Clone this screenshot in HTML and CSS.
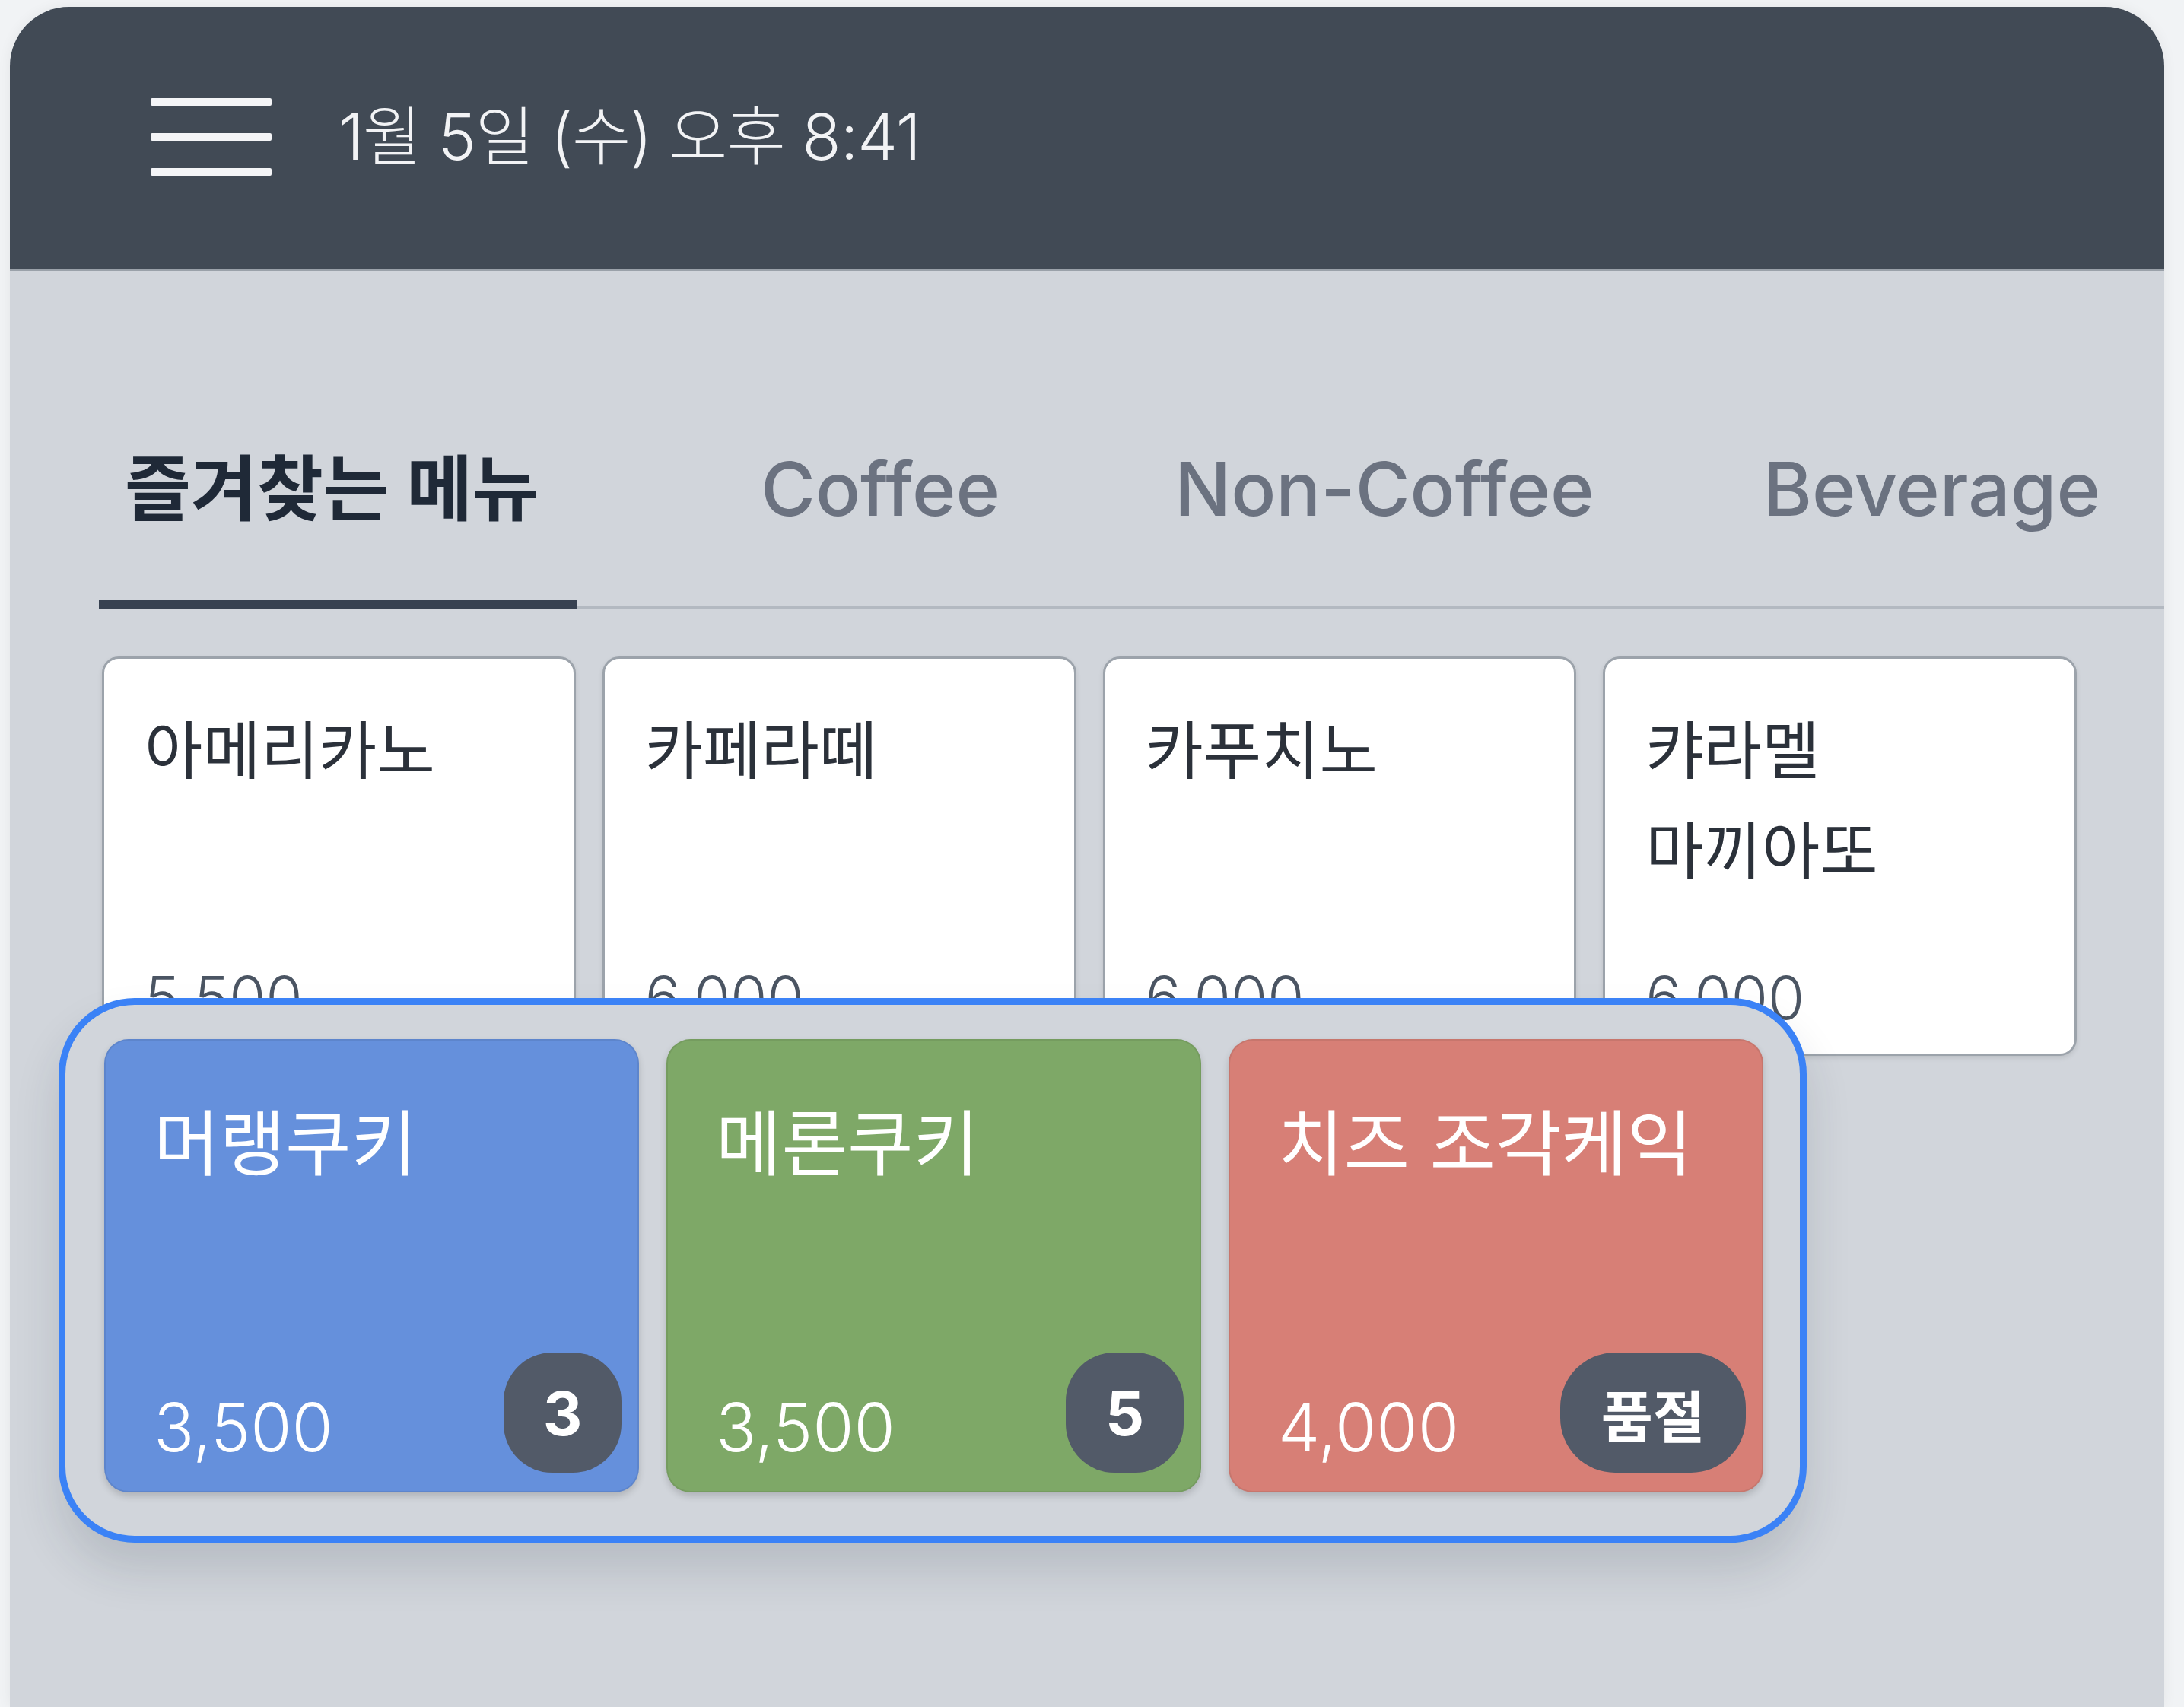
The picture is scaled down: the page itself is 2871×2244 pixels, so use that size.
FILE: index.html
```html
<!DOCTYPE html>
<html lang="ko">
<head>
<meta charset="utf-8">
<title>POS</title>
<link rel="stylesheet" href="styles.css">
</head>
<body>
  <div class="device">
    <header class="topbar">
      <button class="menu-btn" aria-label="메뉴">
        <span></span><span></span><span></span>
      </button>
      <div class="clock">1월 5일 (수) 오후 8:41</div>
    </header>
    <main class="content">
      <nav class="tabs">
        <div class="tab active">즐겨찾는 메뉴</div>
        <div class="tab tab-coffee">Coffee</div>
        <div class="tab tab-noncoffee">Non-Coffee</div>
        <div class="tab tab-beverage">Beverage</div>
      </nav>
      <section class="menu-grid">
        <div class="menu-card">
          <div class="menu-name">아메리카노</div>
          <div class="menu-price">5,500</div>
        </div>
        <div class="menu-card">
          <div class="menu-name">카페라떼</div>
          <div class="menu-price">6,000</div>
        </div>
        <div class="menu-card">
          <div class="menu-name">카푸치노</div>
          <div class="menu-price">6,000</div>
        </div>
        <div class="menu-card">
          <div class="menu-name">캬라멜 마끼아또</div>
          <div class="menu-price">6,000</div>
        </div>
      </section>
      <div class="tray">
        <div class="tray-item blue">
          <div class="item-name">머랭쿠키</div>
          <div class="item-foot">
            <span class="item-price">3,500</span>
            <span class="badge">3</span>
          </div>
        </div>
        <div class="tray-item green">
          <div class="item-name">메론쿠키</div>
          <div class="item-foot">
            <span class="item-price">3,500</span>
            <span class="badge">5</span>
          </div>
        </div>
        <div class="tray-item red">
          <div class="item-name">치즈 조각케익</div>
          <div class="item-foot">
            <span class="item-price">4,000</span>
            <span class="badge badge-wide">품절</span>
          </div>
        </div>
      </div>
    </main>
  </div>
</body>
</html>
```
FILE: styles.css
```css
* { box-sizing: border-box; }

html, body {
  margin: 0;
  padding: 0;
}

body {
  width: 2871px;
  height: 2244px;
  overflow: hidden;
  background: #f1f3f5;
  font-family: "Inter", "Noto Sans CJK KR", sans-serif;
}

.device {
  margin: 9px 26px 0 13px;
  height: 2235px;
  border-radius: 78px 78px 0 0;
  background: #d1d5db;
  overflow: hidden;
  box-shadow: 0 0 18px rgba(0, 0, 0, 0.06);
  display: flex;
  flex-direction: column;
}

/* ---------- top bar ---------- */
.topbar {
  height: 347px;
  flex: 0 0 auto;
  background: #414a55;
  border-bottom: 3px solid #9aa1a9;
  display: flex;
  align-items: center;
  padding-left: 185px;
  padding-bottom: 3px;
}

.menu-btn {
  width: 159px;
  height: 102px;
  padding: 0;
  border: 0;
  background: transparent;
  display: flex;
  flex-direction: column;
  justify-content: space-between;
}

.menu-btn span {
  display: block;
  height: 10px;
  width: 100%;
  border-radius: 2px;
  background: #f4f5f7;
}

.clock {
  margin-left: 88px;
  color: #f2f3f5;
  font-size: 84px;
  font-weight: 300;
  letter-spacing: -1px;
  line-height: 1;
}

/* ---------- content ---------- */
.content {
  position: relative;
  flex: 1 1 auto;
  padding: 229px 115px 0 117px;
}

.tabs {
  display: flex;
  margin-right: -115px;
  border-bottom: 3px solid #b3b9c1;
}

.tab {
  font-size: 98px;
  line-height: 116px;
  font-weight: 500;
  color: #6b7280;
  padding: 0 46px 88px 40px;
  margin-bottom: -3px;
  border-bottom: 11px solid transparent;
  white-space: nowrap;
}

.tab.active {
  color: #1f2937;
  font-weight: 700;
  font-size: 94.5px;
  padding-left: 34px;
  padding-right: 50px;
  border-bottom-color: #374151;
}

.tab-coffee { margin-left: 202px; }
.tab-noncoffee { margin-left: 144px; }
.tab-beverage { margin-left: 136px; }

.menu-grid {
  margin: 63px 0 0 4px;
  display: grid;
  grid-template-columns: repeat(4, 1fr);
  gap: 35px;
}

.menu-card {
  height: 525px;
  background: #ffffff;
  border: 3px solid #9ca3ab;
  border-radius: 22px;
  box-shadow: 0 3px 6px rgba(0, 0, 0, 0.10);
  padding: 55px 56px 34px 53px;
  display: flex;
  flex-direction: column;
  justify-content: space-between;
}

.menu-name {
  font-size: 83px;
  line-height: 132px;
  color: #2b313a;
  word-break: keep-all;
}

.menu-price {
  font-size: 78px;
  line-height: 1;
  font-weight: 300;
  color: #4b5563;
}

/* ---------- floating tray ---------- */
.tray {
  position: absolute;
  left: 64px;
  top: 956px;
  width: 2298px;
  height: 716px;
  border: 9px solid #3b82f6;
  border-radius: 100px;
  background: #d1d5db;
  box-shadow: 0 36px 60px rgba(30, 40, 55, 0.14);
  padding: 45px 50px 57px 51px;
  display: flex;
  gap: 36px;
}

.tray-item {
  flex: 0 0 703px;
  height: 596px;
  border-radius: 32px;
  border: 2px solid rgba(0, 0, 0, 0.07);
  box-shadow: 0 5px 10px rgba(0, 0, 0, 0.16);
  padding: 80px 21px 24px 63px;
  display: flex;
  flex-direction: column;
  justify-content: space-between;
  color: #ffffff;
}

.tray-item.blue { background: #6590dc; }
.tray-item.green { background: #7ea867; }
.tray-item.red { background: #d77f76; }

.item-name {
  font-size: 94px;
  line-height: 1.2;
  white-space: nowrap;
}

.item-foot {
  display: flex;
  justify-content: space-between;
  align-items: flex-end;
}

.item-price {
  font-size: 88px;
  line-height: 1;
  font-weight: 300;
  margin-bottom: 16px;
}

.badge {
  min-width: 155px;
  height: 158px;
  border-radius: 64px;
  background: #525a68;
  color: #ffffff;
  font-size: 80px;
  font-weight: 700;
  display: flex;
  align-items: center;
  justify-content: center;
}

.badge-wide {
  padding: 0 54px;
  font-size: 74px;
  border-radius: 72px;
}
```
